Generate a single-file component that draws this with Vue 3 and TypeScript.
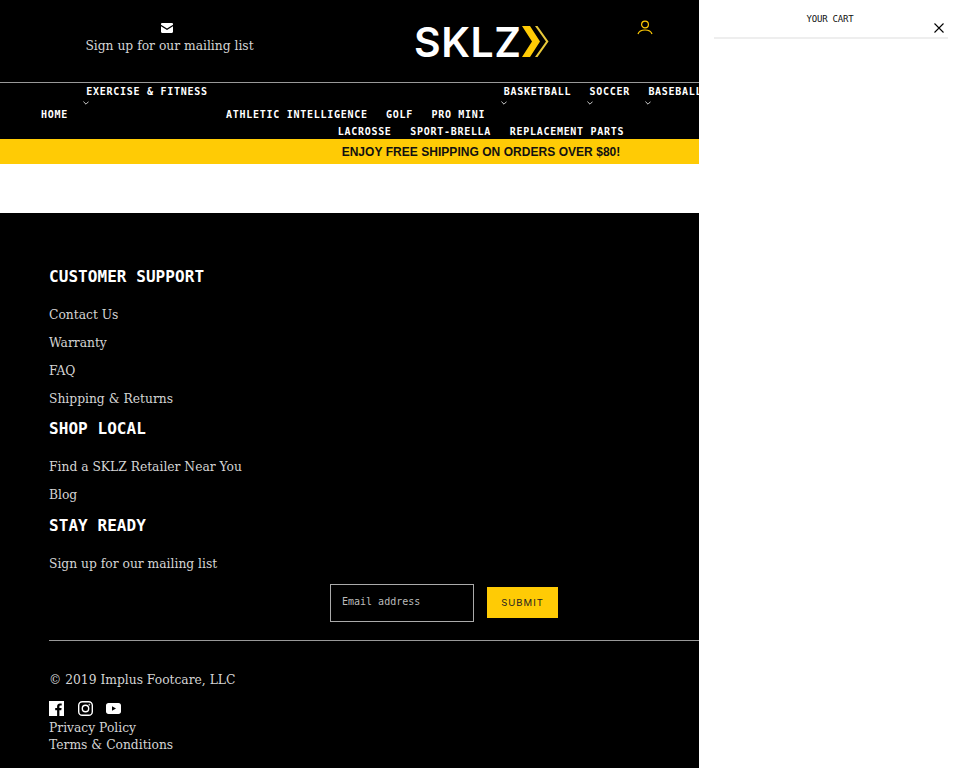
<script setup lang="ts">
interface NavItem {
  label: string
  arrow?: boolean
}

const firstRow: NavItem[] = [
  { label: 'HOME' },
  { label: 'EXERCISE & FITNESS', arrow: true },
  { label: 'ATHLETIC INTELLIGENCE' },
  { label: 'GOLF' },
  { label: 'PRO MINI' },
  { label: 'BASKETBALL', arrow: true },
  { label: 'SOCCER', arrow: true },
  { label: 'BASEBALL', arrow: true }
]
const secondRow: NavItem[] = [
  { label: 'LACROSSE' },
  { label: 'SPORT-BRELLA' },
  { label: 'REPLACEMENT PARTS' }
]

const sections = [
  { title: 'CUSTOMER SUPPORT', links: ['Contact Us', 'Warranty', 'FAQ', 'Shipping & Returns'] },
  { title: 'SHOP LOCAL', links: ['Find a SKLZ Retailer Near You', 'Blog'] },
  { title: 'STAY READY', links: ['Sign up for our mailing list'] }
]
</script>

<template>
  <div class="page">
    <header class="top">
      <div class="mailing">
        <svg class="mail-icon" viewBox="0 0 12 10" width="12" height="10">
          <path d="M0 1.2C0 .5.5 0 1.2 0h9.6c.7 0 1.2.5 1.2 1.2v.5L6 5.6 0 1.7z" fill="#fff" />
          <path d="M0 3.2l6 3.9 6-3.9v5.6c0 .7-.5 1.2-1.2 1.2H1.2C.5 10 0 9.500 0 8.800z" fill="#fff" />
        </svg>
        <span>Sign up for our mailing list</span>
      </div>
      <div class="logo">
        <span class="logo-text">SKLZ</span>
        <svg class="logo-arrows" viewBox="0 0 27 31" width="27" height="31">
          <path d="M0 0h8l10 15.500L8 31H0l10-15.500z" fill="#ffcb05" />
          <path d="M13 0h2.500l11 15.500-11 15.500H13l11-15.500z" fill="#e8c93a" />
        </svg>
      </div>
      <svg class="account" viewBox="0 0 16 15" width="16" height="15" fill="none" stroke="#ffcb05" stroke-width="1.200">
        <circle cx="8" cy="4.500" r="3.400" />
        <path d="M1 14c1-3 3.500-4 7-4s6 1 7 4" />
      </svg>
    </header>

    <nav class="nav">
      <ul class="nav-row first">
        <li v-for="item in firstRow" :key="item.label">
          <a>{{ item.label }}</a>
          <svg v-if="item.arrow" class="caret" viewBox="0 0 6 4" width="6" height="4" fill="none" stroke="#fff" stroke-width=".8">
            <path d="M.4.6L3 3.200 5.600.6" />
          </svg>
        </li>
      </ul>
      <ul class="nav-row second">
        <li v-for="item in secondRow" :key="item.label"><a>{{ item.label }}</a></li>
      </ul>
    </nav>

    <div class="banner">ENJOY FREE SHIPPING ON ORDERS OVER $80!</div>
    <div class="blank"></div>

    <footer class="footer">
      <section v-for="section in sections" :key="section.title" class="section">
        <h4>{{ section.title }}</h4>
        <ul>
          <li v-for="link in section.links" :key="link">{{ link }}</li>
        </ul>
      </section>

      <form class="signup" @submit.prevent>
        <input type="email" placeholder="Email address" />
        <button type="submit">SUBMIT</button>
      </form>

      <hr />

      <p class="copyright">© 2019 Implus Footcare, LLC</p>
      <div class="social">
        <svg viewBox="0 0 15 15" width="15" height="15">
          <path d="M0 0h15v15h-4.600V9.300h1.900l.3-2.200h-2.200V5.700c0-.7.200-1.100 1.100-1.100h1.200v-2c-.2 0-.9-.1-1.700-.1-1.700 0-2.900 1-2.900 3v1.600H6.200v2.200h1.900V15H0z" fill="#fff" />
        </svg>
        <svg viewBox="0 0 15 15" width="15" height="15" fill="none" stroke="#fff" stroke-width="1.400">
          <rect x=".7" y=".7" width="13.600" height="13.600" rx="3.600" />
          <circle cx="7.500" cy="7.500" r="3.200" />
          <circle cx="11.300" cy="3.700" r=".5" fill="#fff" stroke-width=".6" />
        </svg>
        <svg viewBox="0 0 15 11" width="15" height="11">
          <path d="M2.500 0h10C14 0 15 1 15 2.500v6c0 1.500-1 2.500-2.500 2.500h-10C1 11 0 10 0 8.500v-6C0 1 1 0 2.500 0zM6 3.200v4.600l4-2.300z" fill="#fff" fill-rule="evenodd" />
        </svg>
      </div>
      <div class="legal">
        <a>Privacy Policy</a>
        <a>Terms &amp; Conditions</a>
      </div>
    </footer>

    <aside class="drawer">
      <div class="drawer-head">
        <span>YOUR CART</span>
        <svg class="close" viewBox="0 0 10 10" width="10" height="10" fill="none" stroke="#000" stroke-width="1.100">
          <path d="M.5.5l9 9M9.500.5l-9 9" />
        </svg>
      </div>
    </aside>
  </div>
</template>

<style scoped>
.page {
  height: 768px;
  overflow: hidden;
  background: #000;
  color: #d4d4d4;
  font-family: "DejaVu Serif", serif;
  font-size: 12.300px;
}

.top {
  height: 82px;
  display: flex;
  align-items: flex-start;
  border-bottom: 1px solid #999;
}

.mailing {
  width: 339px;
  padding-top: 23px;
  display: flex;
  flex-direction: column;
  align-items: center;
  gap: 5px;
  line-height: 16px;
}

.mail-icon {
  display: block;
  margin-right: 6px;
}

.logo {
  margin-left: 75px;
  margin-top: 26px;
  display: flex;
  align-items: center;
}

.logo-text {
  font-family: Inter, "Liberation Sans", sans-serif;
  font-weight: 600;
  font-size: 41px;
  line-height: 30px;
  letter-spacing: 0.500px;
  color: #fff;
}

.logo-arrows {
  margin-left: 1px;
}

.account {
  margin-left: 88px;
  margin-top: 20px;
}

.nav {
  height: 56px;
  font-family: "DejaVu Sans Mono", monospace;
  font-weight: 700;
  font-size: 10px;
  letter-spacing: 0.720px;
  color: #fff;
}

ul {
  list-style: none;
  margin: 0;
  padding: 0;
}

.nav-row {
  display: flex;
  white-space: nowrap;
}

.nav-row.first {
  height: 40px;
  align-items: flex-end;
  padding-left: 41px;
  gap: 18.400px;
}

.nav-row.second {
  justify-content: center;
  gap: 18.600px;
  height: 16px;
  line-height: 17px;
}

.nav-row.first li {
  line-height: 16px;
}

.nav-row.first li:has(.caret) {
  align-self: flex-start;
  padding-top: 1px;
}

.caret {
  display: block;
  margin: 1px 0 0 -3px;
}

.banner {
  height: 25px;
  line-height: 26px;
  background: #ffcb05;
  color: #111;
  text-align: center;
  font-family: "Liberation Sans", sans-serif;
  font-weight: 700;
  font-size: 12px;
  letter-spacing: 0.040px;
}

.blank {
  height: 49px;
  background: #fff;
}

.footer {
  padding: 51px 0 0 49px;
}

.section {
  margin-bottom: 3px;
}

.section:nth-child(2) {
  margin-bottom: 4px;
}

.section h4 {
  margin: 0;
  height: 26px;
  line-height: 26px;
  font-family: "DejaVu Sans Mono", monospace;
  font-weight: 700;
  font-size: 16px;
  letter-spacing: 0.060px;
  color: #fff;
}

.section ul {
  padding-top: 11px;
}

.section li {
  height: 28px;
  line-height: 29px;
}

.signup {
  display: flex;
  align-items: flex-start;
  gap: 13px;
  margin: 6px 0 0 281px;
}

.signup input {
  width: 144px;
  height: 38px;
  box-sizing: border-box;
  padding: 0 11px 4px;
  background: transparent;
  border: 1px solid #aaa;
  outline: none;
  font-family: "DejaVu Sans Mono", monospace;
  font-size: 10px;
  color: #ccc;
}

.signup input::placeholder {
  color: #bbb;
  opacity: 1;
}

.signup button {
  width: 71px;
  height: 31px;
  margin-top: 3px;
  border: none;
  background: #ffcb05;
  color: #222;
  font-family: Inter, "Liberation Sans", sans-serif;
  font-size: 9.500px;
  letter-spacing: 1px;
}

hr {
  margin: 18px 0 0;
  border: none;
  border-top: 1px solid #999;
}

.copyright {
  margin: 31px 0 0;
  line-height: 16px;
}

.social {
  display: flex;
  align-items: center;
  gap: 13.500px;
  margin-top: 13px;
  height: 15px;
}

.legal {
  display: flex;
  flex-direction: column;
  margin-top: 4px;
  line-height: 17px;
}

.drawer {
  position: absolute;
  top: 0;
  right: 0;
  width: 263px;
  height: 768px;
  background: #fff;
  color: #111;
}

.drawer-head {
  position: relative;
  margin: 0 14px 0 15px;
  height: 37px;
  border-bottom: 2px solid #eee;
  padding-right: 2px;
  text-align: center;
  font-family: "DejaVu Sans Mono", monospace;
  font-size: 9px;
  line-height: 39px;
  letter-spacing: -0.200px;
}

.close {
  position: absolute;
  top: 23px;
  right: 4px;
}
</style>

<style>
html, body {
  margin: 0;
  background: #000;
}
</style>
